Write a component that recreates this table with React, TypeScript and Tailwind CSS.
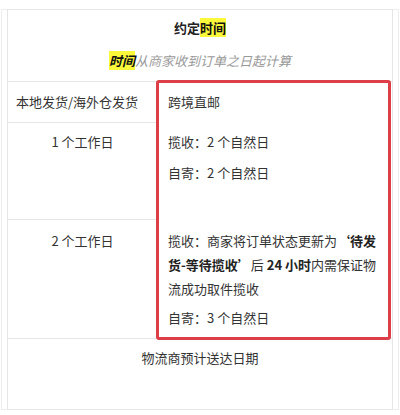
import React from 'react';

const Mark: React.FC<{ children: React.ReactNode; className?: string }> = ({ children, className = '' }) => (
  <span className={`bg-[#fcf93a] text-[#111] font-bold ${className}`}>{children}</span>
);

export default function App() {
  return (
    <div
      className="w-[400px] h-[415px] bg-white pt-[9px] text-[13px] leading-[24px] text-[#333]"
      style={{ fontFamily: '"Noto Sans CJK SC", "Noto Sans", sans-serif' }}
    >
      <div className="flex">
        {/* edge of the neighbouring cell */}
        <div className="w-[7px] pl-[1px]">
          <div className="h-full border-l border-t border-b border-[#eeeeee]" />
        </div>

        <div className="w-[386px] border border-[#e6e6e6]">
          {/* header */}
          <div className="h-[72px] border-b border-[#e6e6e6] flex flex-col items-center pt-[6px] gap-[9px]">
            <div className="font-bold text-[#222]">
              约定<Mark>时间</Mark>
            </div>
            <div className="italic text-[#999]">
              <Mark className="italic">时间</Mark>从商家收到订单之日起计算
            </div>
          </div>

          {/* body */}
          <div className="grid grid-cols-[150px_1fr] border-b border-[#e6e6e6]">
            <div className="border-r border-[#e6e6e6]">
              <div className="h-[41px] border-b border-[#e6e6e6] pl-[8px] pt-[8px]">本地发货/海外仓发货</div>
              <div className="h-[97px] border-b border-[#e6e6e6] text-center pt-[7px]">1 个工作日</div>
              <div className="h-[118px] text-center pt-[9px]">2 个工作日</div>
            </div>
            <div className="relative pl-[10px] pr-[9px]">
              <div className="h-[41px] pt-[8px]">跨境直邮</div>
              <div className="h-[97px] pt-[7px]">
                <p>揽收：2 个自然日</p>
                <p className="mt-[7px]">自寄：2 个自然日</p>
              </div>
              <div className="h-[118px] pt-[9px]">
                <p>
                  揽收：商家将订单状态更新为<b className="text-[#222]">‘待发货-等待揽收’</b>后 <b className="text-[#222]">24 小时</b>内需保证物流成功取件揽收
                </p>
                <p className="mt-[5px]">自寄：3 个自然日</p>
              </div>
              <div className="absolute left-[-2px] top-[-2px] right-[1px] bottom-[-2px] border-[3px] border-[#dc3f48] rounded-[3px] pointer-events-none" />
            </div>
          </div>

          {/* footer */}
          <div className="h-[70px] text-center pt-[7px]">物流商预计送达日期</div>
        </div>

        <div className="w-[7px] pr-[1px]">
          <div className="h-full border-r border-t border-b border-[#eeeeee]" />
        </div>
      </div>
    </div>
  );
}
